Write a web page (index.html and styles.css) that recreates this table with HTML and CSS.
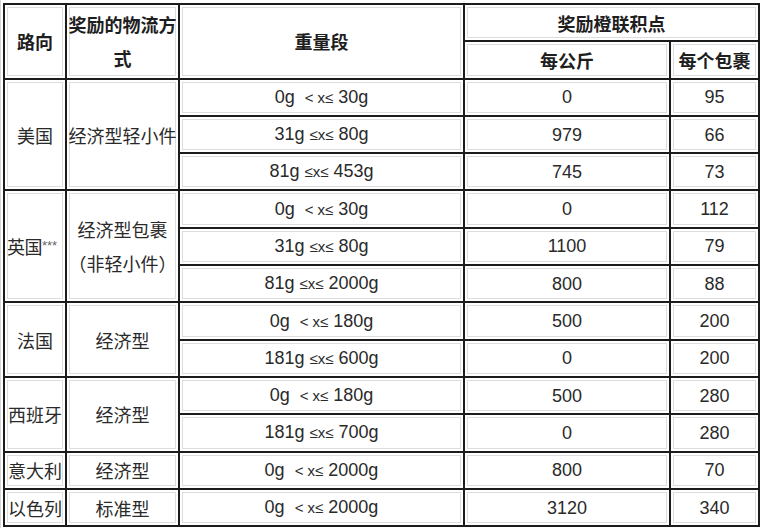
FILE: index.html
```html
<!DOCTYPE html>
<html lang="zh">
<head>
<meta charset="utf-8">
<link rel="stylesheet" href="styles.css">
</head>
<body>
<div class="frame">
<table class="grid">
  <colgroup>
    <col class="c1"><col class="c2"><col class="c3"><col class="c4"><col class="c5">
  </colgroup>
  <thead>
    <tr>
      <th rowspan="2">路向</th>
      <th rowspan="2" class="wrap">奖励的物流方式</th>
      <th rowspan="2">重量段</th>
      <th colspan="2">奖励橙联积点</th>
    </tr>
    <tr>
      <th>每公斤</th>
      <th>每个包裹</th>
    </tr>
  </thead>
  <tbody>
    <tr>
      <td rowspan="3">美国</td>
      <td rowspan="3">经济型轻小件</td>
      <td class="num">0g&nbsp; <span class="op">&lt; x≤</span> 30g</td>
      <td class="num">0</td>
      <td class="num">95</td>
    </tr>
    <tr>
      <td class="num">31g <span class="op">≤x≤</span> 80g</td>
      <td class="num">979</td>
      <td class="num">66</td>
    </tr>
    <tr>
      <td class="num">81g <span class="op">≤x≤</span> 453g</td>
      <td class="num">745</td>
      <td class="num">73</td>
    </tr>
    <tr>
      <td rowspan="3" class="tight">英国<span class="stars">***</span></td>
      <td rowspan="3" class="lines">经济型包裹<br>（非轻小件）</td>
      <td class="num">0g&nbsp; <span class="op">&lt; x≤</span> 30g</td>
      <td class="num">0</td>
      <td class="num">112</td>
    </tr>
    <tr>
      <td class="num">31g <span class="op">≤x≤</span> 80g</td>
      <td class="num">1100</td>
      <td class="num">79</td>
    </tr>
    <tr>
      <td class="num">81g <span class="op">≤x≤</span> 2000g</td>
      <td class="num">800</td>
      <td class="num">88</td>
    </tr>
    <tr>
      <td rowspan="2">法国</td>
      <td rowspan="2">经济型</td>
      <td class="num">0g&nbsp; <span class="op">&lt; x≤</span> 180g</td>
      <td class="num">500</td>
      <td class="num">200</td>
    </tr>
    <tr>
      <td class="num">181g <span class="op">≤x≤</span> 600g</td>
      <td class="num">0</td>
      <td class="num">200</td>
    </tr>
    <tr>
      <td rowspan="2">西班牙</td>
      <td rowspan="2">经济型</td>
      <td class="num">0g&nbsp; <span class="op">&lt; x≤</span> 180g</td>
      <td class="num">500</td>
      <td class="num">280</td>
    </tr>
    <tr>
      <td class="num">181g <span class="op">≤x≤</span> 700g</td>
      <td class="num">0</td>
      <td class="num">280</td>
    </tr>
    <tr>
      <td>意大利</td>
      <td>经济型</td>
      <td class="num">0g&nbsp; <span class="op">&lt; x≤</span> 2000g</td>
      <td class="num">800</td>
      <td class="num">70</td>
    </tr>
    <tr>
      <td>以色列</td>
      <td>标准型</td>
      <td class="num">0g&nbsp; <span class="op">&lt; x≤</span> 2000g</td>
      <td class="num">3120</td>
      <td class="num">340</td>
    </tr>
  </tbody>
</table>
</div>
</body>
</html>
```

FILE: styles.css
```css
html, body {
  margin: 0;
  padding: 0;
  background: #ffffff;
}

.frame {
  width: 760px;
  height: 528px;
  box-sizing: border-box;
  padding: 3px 0 0 2px;
  border-left: 1px solid #d6d6d6;
}

.grid {
  border-collapse: collapse;
  table-layout: fixed;
  width: 755px;
  font-family: "Liberation Sans", "Noto Sans CJK SC", sans-serif;
  font-size: 18px;
  color: #2a2a2a;
}

.grid tr {
  height: 37.3px;
}

.c1 { width: 62px; }
.c2 { width: 113px; }
.c3 { width: 285px; }
.c4 { width: 206px; }
.c5 { width: 89px; }

.grid th,
.grid td {
  border: 2px solid #1c1c1c;
  padding: 0;
  text-align: center;
  vertical-align: middle;
  box-shadow: inset 0 0 0 2px #ffffff, inset 0 0 0 3px #dddddd;
  white-space: nowrap;
}

.grid th {
  font-family: "Noto Sans CJK SC", "Liberation Sans", sans-serif;
  font-weight: 700;
  font-size: 18px;
  color: #1e1e1e;
  line-height: 20px;
}

.grid th.wrap {
  white-space: normal;
  word-break: break-all;
  line-height: 34px;
}

.grid td {
  font-family: "Noto Sans CJK SC", "Liberation Sans", sans-serif;
  font-weight: 400;
  font-size: 18px;
  line-height: 20px;
}

.grid td.num {
  font-family: "Liberation Sans", "Noto Sans CJK SC", sans-serif;
  font-size: 18px;
}

.grid td.lines {
  line-height: 34px;
}

.grid td.tight {
  letter-spacing: -0.5px;
  text-align: left;
  padding-left: 2px;
}

.op {
  font-size: 15px;
}

.stars {
  font-family: "Liberation Sans", sans-serif;
  font-size: 13px;
  color: #666666;
  vertical-align: 4px;
  letter-spacing: 0;
}
```
